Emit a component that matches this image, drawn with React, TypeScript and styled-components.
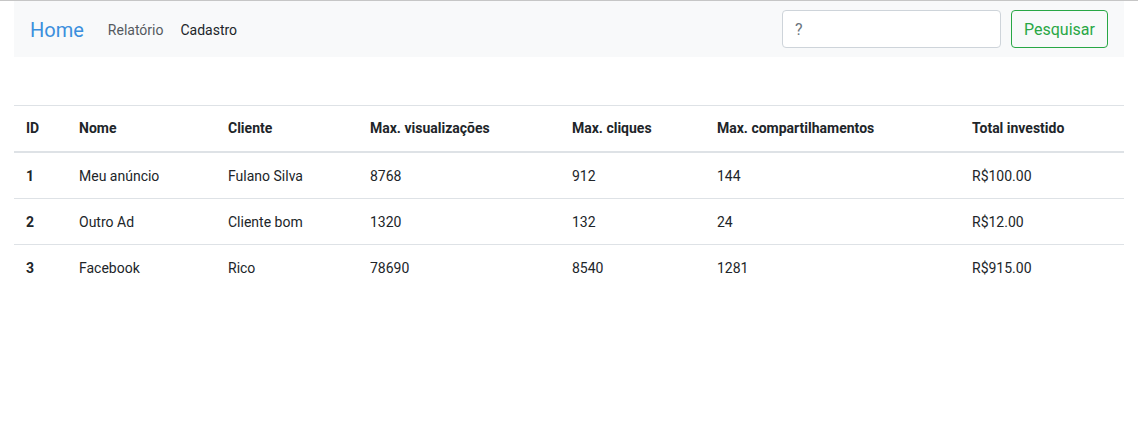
import styled, { createGlobalStyle } from 'styled-components';

const GlobalStyle = createGlobalStyle`
  html, body {
    margin: 0;
    padding: 0;
    background: #fff;
    font-family: Roboto, "Liberation Sans", Arial, sans-serif;
    color: #212529;
  }
  * {
    box-sizing: border-box;
  }
`;

const Page = styled.div`
  border-top: 1px solid #c6c6c6;
  padding: 0 14px;
`;

const Navbar = styled.nav`
  height: 56px;
  background-color: #f8f9fa;
  display: flex;
  align-items: center;
  padding: 0 16px;
`;

const Brand = styled.a`
  font-size: 20px;
  color: #3b8fdd;
  text-decoration: none;
  margin: 2px 24px 0 0;
  line-height: 30px;
`;

const NavLinks = styled.div`
  display: flex;
  gap: 17px;
  flex: 1;
  margin-top: 2px;
`;

const NavLink = styled.a<{ $active?: boolean }>`
  font-size: 14px;
  color: ${props => (props.$active ? '#212529' : '#555a5f')};
  text-decoration: none;
`;

const SearchForm = styled.form`
  display: flex;
  align-items: center;
  gap: 10px;
`;

const SearchInput = styled.input`
  width: 219px;
  height: 38px;
  padding: 6px 12px;
  font-family: inherit;
  font-size: 16px;
  color: #495057;
  border: 1px solid #ced4da;
  border-radius: 4px;
  background: #fff;

  &::placeholder {
    color: #6c757d;
  }
`;

const SearchButton = styled.button`
  height: 38px;
  width: 97px;
  font-family: inherit;
  font-size: 16px;
  color: #28a745;
  background: transparent;
  border: 1px solid #28a745;
  border-radius: 4px;
  cursor: pointer;
`;

const Table = styled.table`
  width: 100%;
  margin-top: 48px;
  border-collapse: collapse;
  table-layout: fixed;
  font-size: 14px;
  line-height: 21px;
`;

const Th = styled.th<{ $width: number }>`
  width: ${props => props.$width}px;
  text-align: left;
  font-weight: 700;
  padding: 12px;
  border-top: 1px solid #dee2e6;
  border-bottom: 2px solid #dee2e6;
`;

const Td = styled.td<{ $bold?: boolean }>`
  padding: 13px 12px 11px;
  border-bottom: 1px solid #dee2e6;
  font-weight: ${props => (props.$bold ? 700 : 400)};
`;

const Row = styled.tr`
  &:last-child td {
    border-bottom: none;
  }
`;

const columns = [
  { label: 'ID', width: 53 },
  { label: 'Nome', width: 149 },
  { label: 'Cliente', width: 142 },
  { label: 'Max. visualizações', width: 202 },
  { label: 'Max. cliques', width: 145 },
  { label: 'Max. compartilhamentos', width: 255 },
  { label: 'Total investido', width: 164 },
];

const ads = [
  { id: 1, nome: 'Meu anúncio', cliente: 'Fulano Silva', views: 8768, clicks: 912, shares: 144, total: 'R$100.00' },
  { id: 2, nome: 'Outro Ad', cliente: 'Cliente bom', views: 1320, clicks: 132, shares: 24, total: 'R$12.00' },
  { id: 3, nome: 'Facebook', cliente: 'Rico', views: 78690, clicks: 8540, shares: 1281, total: 'R$915.00' },
];

const App = () => {
  return (
    <>
      <GlobalStyle />
      <Page>
        <Navbar>
          <Brand href="#">Home</Brand>
          <NavLinks>
            <NavLink href="#">Relatório</NavLink>
            <NavLink href="#" $active>Cadastro</NavLink>
          </NavLinks>
          <SearchForm onSubmit={e => e.preventDefault()}>
            <SearchInput placeholder="?" />
            <SearchButton type="submit">Pesquisar</SearchButton>
          </SearchForm>
        </Navbar>

        <Table>
          <thead>
            <tr>
              {columns.map(col => (
                <Th key={col.label} $width={col.width}>{col.label}</Th>
              ))}
            </tr>
          </thead>
          <tbody>
            {ads.map(ad => (
              <Row key={ad.id}>
                <Td $bold>{ad.id}</Td>
                <Td>{ad.nome}</Td>
                <Td>{ad.cliente}</Td>
                <Td>{ad.views}</Td>
                <Td>{ad.clicks}</Td>
                <Td>{ad.shares}</Td>
                <Td>{ad.total}</Td>
              </Row>
            ))}
          </tbody>
        </Table>
      </Page>
    </>
  );
};

export default App;
